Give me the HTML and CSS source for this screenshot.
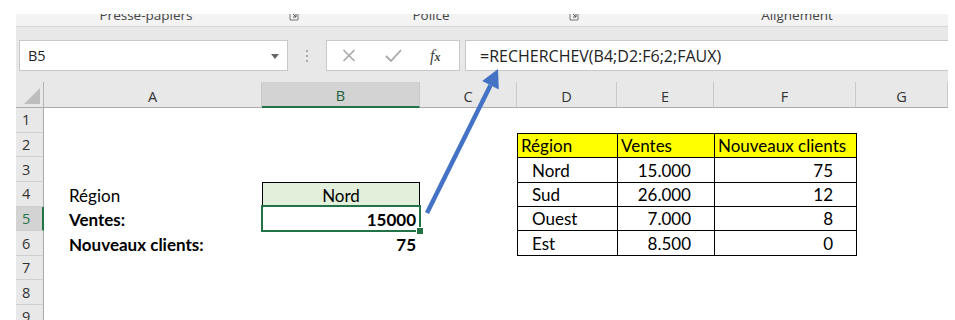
FILE: index.html
```html
<!DOCTYPE html>
<html lang="fr">
<head>
<meta charset="utf-8">
<title>RECHERCHEV</title>
<link rel="stylesheet" href="styles.css">
</head>
<body>
<div class="app">
  <div class="ribbon">
    <span class="rlabel rl-1">Presse-papiers</span>
    <svg class="launcher ln-1" width="10" height="10" viewBox="0 0 10 10"><path d="M1 0V9H9V0" fill="none" stroke="#777" stroke-width="1"/><path d="M3 2L7 6M7 3V6H4" fill="none" stroke="#555" stroke-width="1"/></svg>
    <span class="rlabel rl-2">Police</span>
    <svg class="launcher ln-2" width="10" height="10" viewBox="0 0 10 10"><path d="M1 0V9H9V0" fill="none" stroke="#777" stroke-width="1"/><path d="M3 2L7 6M7 3V6H4" fill="none" stroke="#555" stroke-width="1"/></svg>
    <span class="rlabel rl-3">Alignement</span>
  </div>

  <div class="fbar-area">
    <div class="namebox">
      <span class="name">B5</span>
      <svg class="dd" width="8" height="5" viewBox="0 0 8 5"><path d="M0 0H8L4 5Z" fill="#666"/></svg>
    </div>
    <div class="fsep">
      <span class="dot"></span><span class="dot"></span><span class="dot"></span>
    </div>
    <div class="fbtns">
      <svg class="ico ico-x" width="14" height="13" viewBox="0 0 14 13"><path d="M1.5 1L12.5 12M12.5 1L1.5 12" stroke="#a8a8a8" stroke-width="1.6" fill="none"/></svg>
      <svg class="ico ico-ok" width="17" height="13" viewBox="0 0 17 13"><path d="M1 7L6 12L16 1" stroke="#a8a8a8" stroke-width="1.8" fill="none"/></svg>
      <span class="fx">f<span class="fx-x">x</span></span>
    </div>
    <div class="finput">=RECHERCHEV(B4;D2:F6;2;FAUX)</div>
  </div>

  <div class="sheet">
    <div class="corner"><svg width="16" height="16" viewBox="0 0 16 16"><path d="M16 0V16H0Z" fill="#bdbdbd"/></svg></div>
    <div class="ch">A</div>
    <div class="ch ch-sel">B</div>
    <div class="ch">C</div>
    <div class="ch">D</div>
    <div class="ch">E</div>
    <div class="ch">F</div>
    <div class="ch">G</div>

    <div class="rh r1">1</div>
    <div class="rh r2">2</div>
    <div class="rh r3">3</div>
    <div class="rh r4">4</div>
    <div class="rh r5 rh-sel">5</div>
    <div class="rh r6">6</div>
    <div class="rh r7">7</div>
    <div class="rh r8">8</div>
    <div class="rh r9">9</div>

    <div class="cell ca r4">Région</div>
    <div class="cell ca r5 bold">Ventes:</div>
    <div class="cell ca r6 bold">Nouveaux clients:</div>

    <div class="cell cb r4 key">Nord</div>
    <div class="cell cb r5 bold num selected">15000<span class="handle"></span></div>
    <div class="cell cb r6 bold num">75</div>

    <div class="lookup">
      <table>
        <colgroup><col class="w-d"><col class="w-e"><col class="w-f"></colgroup>
        <tr class="head"><td>Région</td><td>Ventes</td><td>Nouveaux clients</td></tr>
        <tr><td class="ind">Nord</td><td class="num">15.000</td><td class="num">75</td></tr>
        <tr><td class="ind">Sud</td><td class="num">26.000</td><td class="num">12</td></tr>
        <tr><td class="ind">Ouest</td><td class="num">7.000</td><td class="num">8</td></tr>
        <tr><td class="ind">Est</td><td class="num">8.500</td><td class="num">0</td></tr>
      </table>
    </div>
  </div>
</div>

<svg class="arrow" width="955" height="320" viewBox="0 0 955 320">
  <path d="M427 213L490.5 85.2" stroke="#4472c4" stroke-width="4.5" fill="none"/>
  <path d="M498 69L498.8 89.5L482.2 81Z" fill="#4472c4"/>
</svg>
</body>
</html>
```
FILE: styles.css
```css
html, body {
  margin: 0;
  padding: 0;
  background: #ffffff;
}

body {
  width: 955px;
  height: 320px;
  overflow: hidden;
  position: relative;
  font-family: "Open Sans", "Noto Sans", sans-serif;
}

.app {
  margin-left: 16px;
  width: 932px;
  padding-top: 14px;
}

/* ribbon group labels (cut at top, as in the capture) */
.ribbon {
  height: 12px;
  background: #f3f3f3;
  border-bottom: 1px solid #d6d6d6;
  overflow: hidden;
  display: flex;
  align-items: flex-start;
}

.rlabel {
  font-size: 13.5px;
  line-height: 12px;
  color: #444;
  margin-top: -5px;
  white-space: nowrap;
  text-align: center;
  flex: none;
}

.launcher { flex: none; margin-top: -3px; }

.rl-1 { margin-left: 30px; width: 200px; }
.ln-1 { margin-left: 43px; }
.rl-2 { margin-left: 72px; width: 120px; }
.ln-2 { margin-left: 78px; }
.rl-3 { margin-left: 138px; width: 160px; }

/* formula bar */
.fbar-area {
  background: #e8e8e8;
  padding: 13px 0 11px;
  display: flex;
  align-items: stretch;
}

.namebox {
  margin-left: 3px;
  width: 269px;
  height: 31px;
  box-sizing: border-box;
  background: #fff;
  border: 1px solid #c8c8c8;
  display: flex;
  align-items: center;
  justify-content: space-between;
  padding: 0 8px 0 8px;
}

.name {
  font-size: 14.5px;
  color: #222;
}

.dd { margin-top: 1px; }

.fsep {
  width: 38px;
  display: flex;
  flex-direction: column;
  align-items: center;
  justify-content: center;
  gap: 3px;
}

.dot {
  width: 2px;
  height: 2px;
  background: #a9a9a9;
}

.fbtns {
  width: 134px;
  height: 31px;
  box-sizing: border-box;
  background: #fff;
  border: 1px solid #c8c8c8;
  display: flex;
  align-items: center;
}

.ico-x { margin-left: 15px; }
.ico-ok { margin-left: 29px; }

.fx {
  margin-left: 28px;
  font-family: "Liberation Serif", "DejaVu Serif", serif;
  font-style: italic;
  font-size: 16px;
  color: #444;
  line-height: 1;
}

.fx-x {
  font-size: 12px;
  font-weight: bold;
}

.finput {
  flex: 1;
  margin-left: 5px;
  height: 31px;
  box-sizing: border-box;
  background: #fff;
  border: 1px solid #c8c8c8;
  border-right: none;
  padding-left: 14px;
  display: flex;
  align-items: center;
  font-size: 16px;
  color: #222;
  white-space: nowrap;
}

/* sheet */
.sheet {
  display: grid;
  grid-template-columns: 28px 218px 158px 97px 100px 97px 142px 92px;
  grid-template-rows: 26px repeat(9, 24.65px);
  background: #fff;
}

.corner {
  grid-column: 1;
  grid-row: 1;
  background: #e8e8e8;
  border-right: 1px solid #b5b5b5;
  border-bottom: 1px solid #ababab;
  display: flex;
  align-items: flex-end;
  justify-content: flex-end;
  padding: 0 3px 3px 0;
}

.ch {
  grid-row: 1;
  background: #e8e8e8;
  border-right: 1px solid #c9c9c9;
  border-bottom: 1px solid #ababab;
  display: flex;
  align-items: center;
  justify-content: center;
  padding-top: 3px;
  font-size: 14.5px;
  color: #333;
}

.ch:last-of-type { border-right: none; }

.ch-sel {
  background: #d3d3d3;
  border-bottom: 2px solid #217346;
  color: #1e5c3a;
}

.rh {
  grid-column: 1;
  background: #e8e8e8;
  border-right: 1px solid #ababab;
  border-bottom: 1px solid #cfcfcf;
  display: flex;
  align-items: center;
  padding-left: 6px;
  font-size: 14.5px;
  color: #333;
}

.rh-sel {
  background: #d3d3d3;
  border-right: 2px solid #217346;
  color: #217346;
}

.r1 { grid-row: 2; }
.r2 { grid-row: 3; }
.r3 { grid-row: 4; }
.r4 { grid-row: 5; }
.r5 { grid-row: 6; }
.r6 { grid-row: 7; }
.r7 { grid-row: 8; }
.r8 { grid-row: 9; }
.r9 { grid-row: 10; }

.cell {
  display: flex;
  align-items: flex-end;
  font-family: Lato, "Liberation Sans", sans-serif;
  font-size: 17px;
  line-height: 1;
  color: #000;
  padding: 0 4px 3px;
  white-space: nowrap;
}

.bold { font-weight: bold; }

.ca {
  grid-column: 2;
  padding-left: 25px;
}

.cb { grid-column: 3; }

.num { justify-content: flex-end; }

.key {
  justify-content: center;
  background: #e2efda;
  border: 1px solid #000;
  padding-bottom: 2px;
}

.selected {
  position: relative;
  z-index: 2;
  margin: -2px -1px -1px -1px;
  border: 2px solid #217346;
  padding-right: 3px;
  padding-bottom: 2px;
}

.handle {
  position: absolute;
  right: -5px;
  bottom: -5px;
  width: 6px;
  height: 6px;
  background: #217346;
  border: 1px solid #fff;
}

.lookup {
  grid-column: 5 / 8;
  grid-row: 3 / 8;
}

.lookup table {
  border-collapse: collapse;
  table-layout: fixed;
  width: 100%;
  height: 100%;
  font-family: Lato, "Liberation Sans", sans-serif;
  font-size: 17px;
  line-height: 1;
}

.w-d { width: 100px; }
.w-e { width: 97px; }
.w-f { width: 142px; }

.lookup td {
  border: 1px solid #000;
  vertical-align: bottom;
  padding: 0 3px 3px 3px;
  white-space: nowrap;
  overflow: hidden;
}

.lookup tr.head td {
  background: #ffff00;
}

.lookup td.ind { padding-left: 14px; }

.lookup td.num {
  text-align: right;
  padding-right: 23px;
}

.arrow {
  position: absolute;
  left: 0;
  top: 0;
  pointer-events: none;
}
```
